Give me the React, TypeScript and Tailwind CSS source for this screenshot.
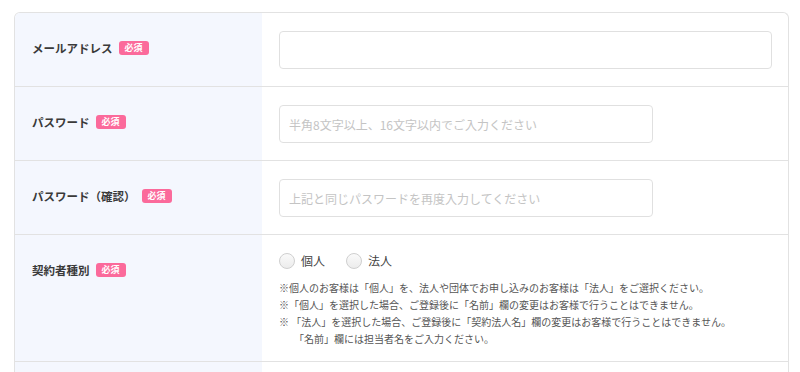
import React from "react";

const font = { fontFamily: '"Noto Sans CJK JP", "Noto Sans", sans-serif' };

export default function App() {
  return (
    <div className="min-h-[372px] bg-white pl-[14px] pr-[11px] pt-[12px]" style={font}>
      <div className="overflow-hidden rounded-t-[6px] border border-b-0 border-[#e2e2e2]">
        <Row label="メールアドレス">
          <div className="pb-[17px] pr-[16px] pt-[18px]">
            <input className="h-[38px] w-full rounded-[4px] border border-[#e0e0e0] bg-white px-[9px] text-[12px] outline-none" />
          </div>
        </Row>
        <Row label="パスワード">
          <div className="pb-[17px] pt-[18px]">
            <input
              placeholder="半角8文字以上、16文字以内でご入力ください"
              className="h-[38px] w-[374px] rounded-[4px] border border-[#e0e0e0] bg-white px-[9px] text-[12px] text-[#333] outline-none placeholder:text-[#c4c4c4]"
            />
          </div>
        </Row>
        <Row label="パスワード（確認）">
          <div className="pb-[17px] pt-[18px]">
            <input
              placeholder="上記と同じパスワードを再度入力してください"
              className="h-[38px] w-[374px] rounded-[4px] border border-[#e0e0e0] bg-white px-[9px] text-[12px] text-[#333] outline-none placeholder:text-[#c4c4c4]"
            />
          </div>
        </Row>
        <Row label="契約者種別">
          <div className="pb-[14px] pt-[18px]">
            <div className="flex items-center gap-[21px]">
              <Radio text="個人" />
              <Radio text="法人" />
            </div>
            <div className="mt-[10px] text-[10px] leading-[17px] text-[#555]">
              <p>※個人のお客様は「個人」を、法人や団体でお申し込みのお客様は「法人」をご選択ください。</p>
              <p>※「個人」を選択した場合、ご登録後に「名前」欄の変更はお客様で行うことはできません。</p>
              <p>※ 「法人」を選択した場合、ご登録後に「契約法人名」欄の変更はお客様で行うことはできません。</p>
              <p className="pl-[15px]">「名前」欄には担当者名をご入力ください。</p>
            </div>
          </div>
        </Row>
        <div className="flex h-[40px] border-t border-[#e2e2e2]">
          <div className="w-[247px] bg-[#f4f7fe]" />
          <div className="flex-1" />
        </div>
      </div>
    </div>
  );
}

function Row({ label, children }: { label: string; children: React.ReactNode }) {
  return (
    <div className="flex border-t border-[#e2e2e2] first:border-t-0">
      <div className="flex w-[247px] shrink-0 items-start gap-[6px] bg-[#f4f7fe] pl-[17px] pt-[26px]">
        <span className="text-[11.5px] font-semibold leading-[18px] text-[#3a3a3a]">{label}</span>
        <span className="mt-[2px] rounded-[3px] bg-[#fb6a9b] px-[6px] text-[9px] font-bold leading-[14px] text-white">
          必須
        </span>
      </div>
      <div className="flex-1 pl-[17px]">{children}</div>
    </div>
  );
}

function Radio({ text }: { text: string }) {
  return (
    <label className="flex items-center gap-[6px]">
      <span className="h-[16px] w-[16px] rounded-full border border-[#cfcfcf] bg-gradient-to-b from-[#fafafa] to-[#ececec]" />
      <span className="text-[12px] leading-[16px] text-[#444]">{text}</span>
    </label>
  );
}
